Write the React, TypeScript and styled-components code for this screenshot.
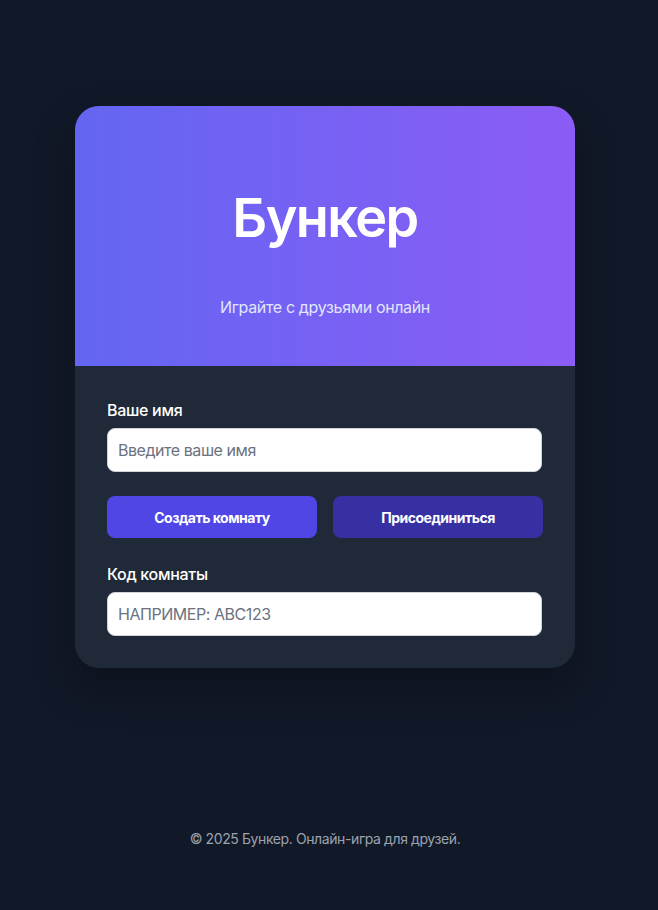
import React from "react";
import styled, { createGlobalStyle } from "styled-components";

const Global = createGlobalStyle`
  html, body { margin: 0; padding: 0; background: #111827; }
  body { font-family: Inter, "Noto Sans", sans-serif; color: #f9fafb; }
  * { box-sizing: border-box; }
`;

const Page = styled.div`
  min-height: 100vh;
  display: flex;
  flex-direction: column;
  align-items: center;
  padding-right: 8px;
`;

const Main = styled.main`
  padding-top: 106px;
  width: 500px;
`;

const Card = styled.section`
  background: #1f2937;
  border-radius: 24px;
  overflow: hidden;
  box-shadow: 0 20px 40px rgba(0, 0, 0, 0.25);
`;

const Header = styled.header`
  height: 260px;
  background: linear-gradient(90deg, #6366f1 0%, #8b5cf6 100%);
  display: flex;
  flex-direction: column;
  align-items: center;
  padding-top: 82px;
`;

const Title = styled.h1`
  margin: 0;
  font-size: 54px;
  line-height: 60px;
  font-weight: 600;
  letter-spacing: -1.6px;
  color: #ffffff;
`;

const Subtitle = styled.p`
  margin: 47px 0 0;
  font-size: 16px;
  line-height: 24px;
  letter-spacing: -0.35px;
  color: #e0e7ff;
`;

const Body = styled.div`
  padding: 32px;
  display: flex;
  flex-direction: column;
`;

const Label = styled.label<{ $top?: number }>`
  display: block;
  margin-top: ${(p) => p.$top ?? 0}px;
  font-size: 16px;
  line-height: 24px;
  font-weight: 500;
  letter-spacing: -0.3px;
  color: #ffffff;
  margin-bottom: 6px;
`;

const Input = styled.input`
  width: 435px;
  height: 44px;
  border: 1px solid #d1d5db;
  border-radius: 8px;
  background: #ffffff;
  padding: 0 10px;
  font-family: Inter, "Noto Sans", sans-serif;
  font-size: 16px;
  letter-spacing: -0.45px;
  color: #111827;
  outline: none;
  &::placeholder { color: #6b7280; }
`;

const Buttons = styled.div`
  display: grid;
  grid-template-columns: 1fr 1fr;
  gap: 16px;
  margin-top: 24px;
`;

const Button = styled.button<{ $variant: "primary" | "secondary" }>`
  height: 42px;
  border: none;
  border-radius: 8px;
  background: ${(p) => (p.$variant === "primary" ? "#4f46e5" : "#3730a3")};
  color: #ffffff;
  font-family: Inter, "Noto Sans", sans-serif;
  font-size: 14px;
  font-weight: 700;
  letter-spacing: -0.5px;
  cursor: pointer;
`;

const Footer = styled.footer`
  margin-top: 161px;
  font-size: 14px;
  line-height: 20px;
  letter-spacing: -0.4px;
  color: #9ca3af;
  text-align: center;
`;

export default function App() {
  return (
    <>
      <Global />
      <Page>
        <Main>
          <Card>
            <Header>
              <Title>Бункер</Title>
              <Subtitle>Играйте с друзьями онлайн</Subtitle>
            </Header>
            <Body>
              <Label>Ваше имя</Label>
              <Input placeholder="Введите ваше имя" />
              <Buttons>
                <Button $variant="primary">Создать комнату</Button>
                <Button $variant="secondary">Присоединиться</Button>
              </Buttons>
              <Label $top={24}>Код комнаты</Label>
              <Input placeholder="НАПРИМЕР: ABC123" />
            </Body>
          </Card>
        </Main>
        <Footer>© 2025 Бункер. Онлайн-игра для друзей.</Footer>
      </Page>
    </>
  );
}
